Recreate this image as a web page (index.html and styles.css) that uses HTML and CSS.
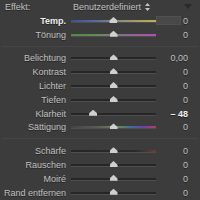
FILE: index.html
```html
<!DOCTYPE html>
<html>
<head>
<meta charset="utf-8">
<link rel="stylesheet" href="styles.css">
</head>
<body>
<div class="panel">
  <div class="effect-row">
    <span class="elabel">Effekt:</span>
    <span class="preset">Benutzerdefiniert <svg class="updown" width="5" height="8" viewBox="0 0 5 8"><path d="M2.5 0 L5 3 L0 3 Z M2.5 8 L5 5 L0 5 Z" fill="#c4c4c4"/></svg></span>
    <span class="tri"></span>
  </div>

  <div class="group">
    <div class="row"><span class="label strong">Temp.</span><span class="track temp"><span class="thumb" style="left:50%"></span></span><span class="value"><span class="field"></span>0</span></div>
    <div class="row"><span class="label">Tönung</span><span class="track tint"><span class="thumb" style="left:50%"></span></span><span class="value">0</span></div>
  </div>

  <div class="sep"></div>

  <div class="group">
    <div class="row"><span class="label">Belichtung</span><span class="track"><span class="thumb" style="left:50%"></span></span><span class="value">0,00</span></div>
    <div class="row"><span class="label">Kontrast</span><span class="track"><span class="thumb" style="left:50%"></span></span><span class="value">0</span></div>
    <div class="row"><span class="label">Lichter</span><span class="track"><span class="thumb" style="left:50%"></span></span><span class="value">0</span></div>
    <div class="row"><span class="label">Tiefen</span><span class="track"><span class="thumb" style="left:50%"></span></span><span class="value">0</span></div>
    <div class="row"><span class="label">Klarheit</span><span class="track"><span class="thumb" style="left:26%"></span></span><span class="value strong">&#8211; 48</span></div>
    <div class="row"><span class="label">Sättigung</span><span class="track sat"><span class="thumb" style="left:50%"></span></span><span class="value">0</span></div>
  </div>

  <div class="sep"></div>

  <div class="group">
    <div class="row"><span class="label">Schärfe</span><span class="track sharp"><span class="thumb" style="left:50%"></span></span><span class="value">0</span></div>
    <div class="row"><span class="label">Rauschen</span><span class="track"><span class="thumb" style="left:50%"></span></span><span class="value">0</span></div>
    <div class="row"><span class="label">Moiré</span><span class="track"><span class="thumb" style="left:50%"></span></span><span class="value">0</span></div>
    <div class="row"><span class="label">Rand entfernen</span><span class="track"><span class="thumb" style="left:50%"></span></span><span class="value">0</span></div>
  </div>
</div>
</body>
</html>
```

FILE: styles.css
```css
html, body {
  margin: 0;
  padding: 0;
  background: #3c3c3c;
}
.panel {
  width: 200px;
  height: 200px;
  overflow: hidden;
  font-family: "Liberation Sans", Arial, sans-serif;
  font-size: 9px;
  color: #c2c2c2;
  text-shadow: 0 1px 0 #222;
}
.effect-row {
  position: relative;
  display: flex;
  align-items: center;
  height: 14px;
}
.elabel {
  margin-left: 5px;
  width: 68px;
}
.preset {
  display: flex;
  align-items: center;
  color: #c4c4c4;
}
.updown {
  margin-left: 4px;
}
.tri {
  position: absolute;
  right: 8px;
  top: 4px;
  width: 0;
  height: 0;
  border-left: 4px solid transparent;
  border-right: 4px solid transparent;
  border-top: 5px solid #2a2a2a;
}
.group {
  display: flex;
  flex-direction: column;
}
.row {
  display: flex;
  align-items: center;
  height: 13.8px;
}
.label {
  width: 66px;
  text-align: right;
  white-space: nowrap;
}
.strong {
  color: #f0f0f0;
  font-weight: bold;
}
.track {
  position: relative;
  margin-left: 5px;
  width: 85px;
  height: 2px;
  background: #262626;
  border-bottom: 1px solid #4e4e4e;
  margin-top: 1px;
}
.track.temp {
  background: linear-gradient(to right, #3f4f94, #5a6aa0 30%, #8a8a80 55%, #c0b050);
}
.track.tint {
  background: linear-gradient(to right, #4f8a40, #6a8a60 35%, #8a6a90 65%, #b050b0);
}
.track.sat {
  background: linear-gradient(to right, #444 0%, #5a5a5a 30%, #6a8a50 55%, #3f6a9a 72%, #7040b0 85%, #b04060 100%);
}
.track.sharp {
  background: linear-gradient(to right, #262626 0%, #2a2a2a 75%, #6a4030 100%);
}
.thumb {
  position: absolute;
  bottom: -1px;
  width: 8px;
  height: 6px;
  margin-left: -4px;
  background: #cfcfcf;
  clip-path: polygon(50% 0, 100% 60%, 100% 100%, 0 100%, 0 60%);
}
.value {
  flex: 1;
  display: flex;
  justify-content: flex-end;
  align-items: center;
  padding-right: 12px;
  white-space: nowrap;
}
.field {
  width: 25px;
  height: 9px;
  background: #484848;
  border: 1px solid #505050;
  margin-right: 2px;
  box-sizing: border-box;
}
.sep {
  height: 1px;
  background: #464646;
  margin: 4px 2px 5px 2px;
}
```
